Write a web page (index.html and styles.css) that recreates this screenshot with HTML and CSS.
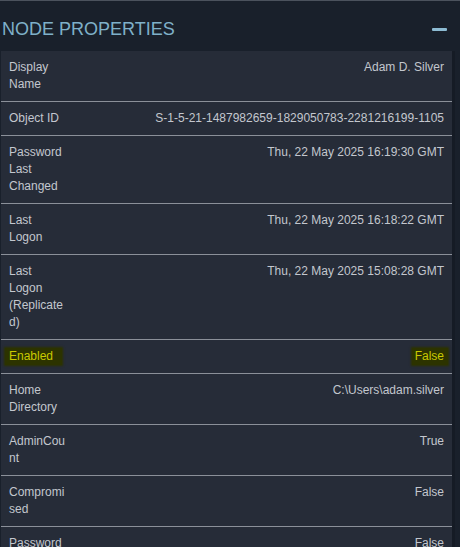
FILE: index.html
```html
<!DOCTYPE html>
<html>
<head>
<meta charset="utf-8">
<link rel="stylesheet" href="styles.css">
</head>
<body>
<div class="panel">
  <div class="header">
    <span class="title">NODE PROPERTIES</span>
    <span class="collapse" aria-label="collapse"></span>
  </div>
  <div class="props">
    <div class="row"><div class="label">Display Name</div><div class="value">Adam D. Silver</div></div>
    <div class="row"><div class="label">Object ID</div><div class="value">S-1-5-21-1487982659-1829050783-2281216199-1105</div></div>
    <div class="row"><div class="label">Password Last Changed</div><div class="value">Thu, 22 May 2025 16:19:30 GMT</div></div>
    <div class="row"><div class="label">Last Logon</div><div class="value">Thu, 22 May 2025 16:18:22 GMT</div></div>
    <div class="row"><div class="label">Last Logon (Replicated)</div><div class="value">Thu, 22 May 2025 15:08:28 GMT</div></div>
    <div class="row"><div class="label"><span class="hl hl-label">Enabled</span></div><div class="value"><span class="hl hl-value">False</span></div></div>
    <div class="row"><div class="label">Home Directory</div><div class="value">C:\Users\adam.silver</div></div>
    <div class="row"><div class="label">AdminCount</div><div class="value">True</div></div>
    <div class="row"><div class="label">Compromised</div><div class="value">False</div></div>
    <div class="row"><div class="label">Password Never Expires</div><div class="value">False</div></div>
  </div>
</div>
</body>
</html>
```
FILE: styles.css
```css
html, body {
  margin: 0;
  padding: 0;
  background: #19202b;
  overflow: hidden;
  height: 547px;
}
body {
  font-family: "Liberation Sans", Arial, sans-serif;
}
.panel {
  border-top: 1px solid #4b525d;
  background: #19202b;
}
.header {
  display: flex;
  align-items: center;
  justify-content: space-between;
  padding: 18px 13px 11px 2px;
}
.title {
  font-size: 18px;
  line-height: 21px;
  color: #7fb0c9;
  letter-spacing: 0;
}
.collapse {
  display: block;
  width: 15px;
  height: 3px;
  background: #8dbbd3;
  border-radius: 1px;
}
.props {
  margin-left: 1px;
  width: 451px;
  background: #262c38;
  border-right: 3px solid #151b25;
}
.row {
  display: flex;
  align-items: flex-start;
  padding: 8px 8px;
  border-bottom: 1px solid #8b9099;
  font-size: 12px;
  line-height: 17px;
  color: #c3c7ce;
}
.label {
  width: 57px;
  flex-shrink: 0;
  overflow-wrap: anywhere;
}
.value {
  flex: 1;
  text-align: right;
}
.hl {
  display: inline-block;
  color: #c9c900;
  background: #2c3300;
  box-shadow: 0 0 2px 1px #2c3300;
  line-height: 17px;
  white-space: nowrap;
}
.hl-label {
  margin-left: -4px;
  padding: 0 9px 0 4px;
}
.hl-value {
  margin-right: -4px;
  padding: 0 4px 0 3px;
}
```
